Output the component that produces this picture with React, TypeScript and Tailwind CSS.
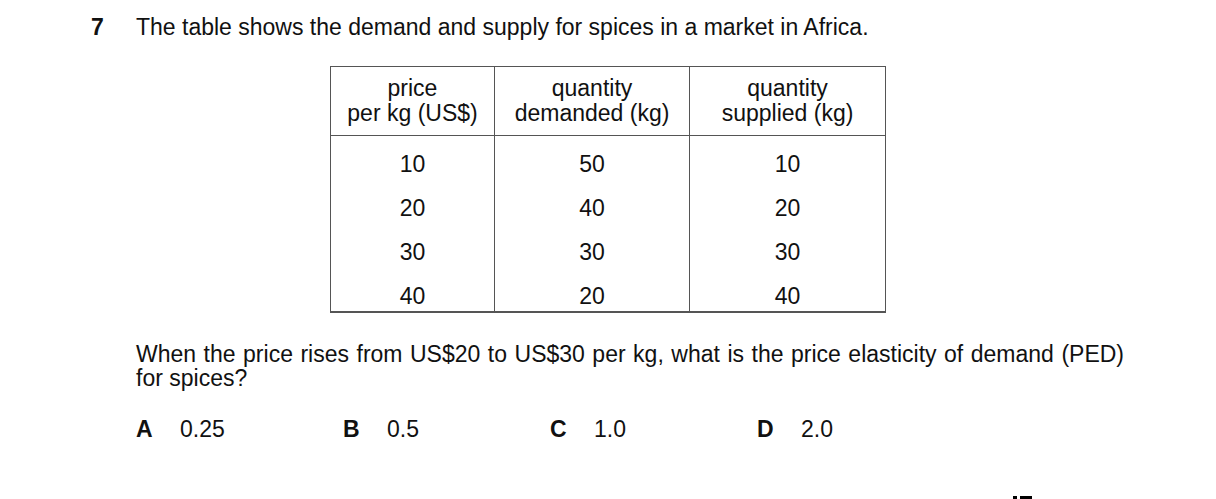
import React from 'react';

const rows = [
  ['10', '50', '10'],
  ['20', '40', '20'],
  ['30', '30', '30'],
  ['40', '20', '40'],
];

const headers = [
  ['price', 'per kg (US$)'],
  ['quantity', 'demanded (kg)'],
  ['quantity', 'supplied (kg)'],
];

const colWidths = ['w-[163px]', 'w-[195px]', 'w-[196px]'];

const options = [
  ['A', '0.25'],
  ['B', '0.5'],
  ['C', '1.0'],
  ['D', '2.0'],
];

export default function App() {
  return (
    <div className="w-[1216px] h-[499px] overflow-hidden bg-white text-[#111] text-[23px] leading-[24px]" style={{ fontFamily: '"Liberation Sans", Arial, sans-serif' }}>
      {/* question stem */}
      <div className="flex pt-[15px]">
        <span className="w-[136px] pl-[91px] font-bold">7</span>
        <span>The table shows the demand and supply for spices in a market in Africa.</span>
      </div>

      {/* table */}
      <div className="ml-[330px] mt-[27px] flex w-[556px] border border-b-2 border-[#555]">
        {headers.map((h, ci) => (
          <div key={ci} className={`${colWidths[ci]} ${ci > 0 ? 'border-l border-[#555]' : ''} flex flex-col`}>
            <div className="h-[69px] pb-[1px] border-b border-[#555] flex flex-col items-center justify-center leading-[25px]">
              <span>{h[0]}</span>
              <span>{h[1]}</span>
            </div>
            <div className="h-[175px] pt-[6px] flex flex-col items-center">
              {rows.map((r, ri) => (
                <div key={ri} className="h-[44px] shrink-0 leading-[44px]">{r[ci]}</div>
              ))}
            </div>
          </div>
        ))}
      </div>

      {/* question */}
      <p className="ml-[136px] mt-[29px] w-[988px] text-justify">
        When the price rises from US$20 to US$30 per kg, what is the price elasticity of demand (PED) for spices?
      </p>

      {/* options */}
      <div className="ml-[136px] mt-[27px] flex">
        {options.map(([l, v]) => (
          <div key={l} className="w-[207px] flex">
            <span className="w-[44px] font-bold">{l}</span>
            <span>{v}</span>
          </div>
        ))}
      </div>

      {/* cut-off mark at page bottom */}
      <div className="ml-[1013px] mt-[55px] flex gap-[3px]">
        <div className="w-[4px] h-[3px] bg-black" />
        <div className="w-[12px] h-[3px] bg-black" />
      </div>
    </div>
  );
}
